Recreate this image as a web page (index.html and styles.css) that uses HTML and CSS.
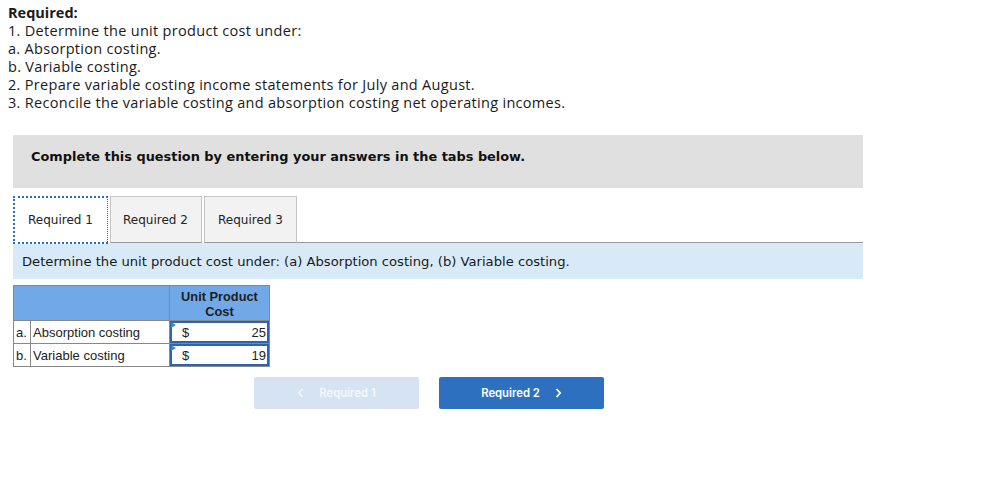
FILE: index.html
```html
<!DOCTYPE html>
<html>
<head>
<meta charset="utf-8">
<link rel="stylesheet" href="styles.css">
</head>
<body>
<div class="required">
  <div class="req-title">Required:</div>
  <div>1. Determine the unit product cost under:</div>
  <div>a. Absorption costing.</div>
  <div>b. Variable costing.</div>
  <div>2. Prepare variable costing income statements for July and August.</div>
  <div>3. Reconcile the variable costing and absorption costing net operating incomes.</div>
</div>

<div class="panel">
  <div class="banner">Complete this question by entering your answers in the tabs below.</div>
  <div class="tabs">
    <div class="tab active">Required 1</div>
    <div class="tab">Required 2</div>
    <div class="tab">Required 3</div>
    <div class="tab-fill"></div>
  </div>
  <div class="info">Determine the unit product cost under: (a) Absorption costing, (b) Variable costing.</div>

  <table class="cost">
    <tr class="head">
      <th colspan="2"></th>
      <th>Unit Product<br>Cost</th>
    </tr>
    <tr>
      <td class="letter">a.</td>
      <td class="label">Absorption costing</td>
      <td class="val"><div class="input"><span class="flag"></span><span>$</span><span>25</span></div></td>
    </tr>
    <tr>
      <td class="letter">b.</td>
      <td class="label">Variable costing</td>
      <td class="val"><div class="input"><span class="flag"></span><span>$</span><span>19</span></div></td>
    </tr>
  </table>

  <div class="nav">
    <div class="btn disabled">
      <svg width="7" height="10" viewBox="0 0 7 10"><path d="M5.5 1 L1.8 5 L5.5 9" fill="none" stroke="currentColor" stroke-width="1.8"/></svg>
      <span>Required 1</span>
    </div>
    <div class="btn primary">
      <span>Required 2</span>
      <svg width="7" height="10" viewBox="0 0 7 10"><path d="M1.5 1 L5.2 5 L1.5 9" fill="none" stroke="currentColor" stroke-width="1.8"/></svg>
    </div>
  </div>
</div>
</body>
</html>
```

FILE: styles.css
```css
body {
  margin: 0;
  background: #fff;
  color: #1a1a1a;
}
.required {
  padding: 4px 0 0 8px;
  font-family: "Open Sans", "Liberation Sans", sans-serif;
  font-size: 14.5px;
  letter-spacing: 0.3px;
  line-height: 18px;
  color: #1a1a1a;
}
.req-title {
  font-weight: bold;
  letter-spacing: 0;
}
.panel {
  margin: 23px 0 0 13px;
  width: 850px;
}
.banner {
  background: #e0e0e0;
  height: 53px;
  box-sizing: border-box;
  padding: 14px 0 0 18px;
  font-family: "DejaVu Sans", Verdana, sans-serif;
  font-weight: bold;
  font-size: 12.9px;
  color: #111;
}
.tabs {
  display: flex;
  margin-top: 8px;
  height: 47px;
  align-items: flex-end;
}
.tab {
  height: 47px;
  box-sizing: border-box;
  border: 1px solid #c4c4c4;
  background: #f2f2f2;
  font-family: "DejaVu Sans", Verdana, sans-serif;
  font-size: 12px;
  color: #222;
  display: flex;
  align-items: center;
  padding: 0 13px;
  margin-right: 2px;
  border-bottom: 1px solid #999;
}
.tab.active {
  background: #fff;
  border: 1px dotted #2a6bc4;
  border-width: 2px 1px 2px 2px;
  height: 48px;
  margin-bottom: -1px;
  padding: 0 14px 0 13px;
  width: 95px;
  margin-right: 2px;
}
.tab:nth-child(2) { width: 92px; padding-left: 12px; }
.tab:nth-child(3) { width: 93px; padding-left: 13px; }
.tab-fill {
  flex: 1;
  border-bottom: 1px solid #999;
  height: 1px;
  margin-left: -2px;
}
.info {
  background: #d8eaf8;
  height: 36px;
  box-sizing: border-box;
  padding: 11px 0 0 9px;
  font-family: "DejaVu Sans", Verdana, sans-serif;
  font-size: 13.15px;
  color: #1a1a1a;
}
.cost {
  margin-top: 6px;
  border-collapse: collapse;
  font-family: "Liberation Sans", Arial, sans-serif;
  font-size: 13px;
  color: #222;
}
.cost th {
  background: #71a8e7;
  border: 1px solid #888;
  height: 33px;
  padding: 0;
  font-weight: bold;
  font-size: 12.8px;
  line-height: 15px;
  color: #1e1e1e;
}
.cost th:first-child { width: 155px; }
.cost th:last-child { width: 99px; padding-top: 1px; }
.cost td {
  border: 1px solid #888;
  height: 22px;
  padding: 0;
}
.cost td.letter {
  width: 17px;
  padding-left: 2px;
  box-sizing: border-box;
}
.cost td.label {
  padding-left: 2px;
  width: 135px;
}
.cost td.val {
  padding: 0;
}
.input {
  position: relative;
  border: 2px solid #2c64ad;
  height: 22px;
  box-sizing: border-box;
  display: flex;
  justify-content: space-between;
  align-items: center;
  padding: 0 1px 0 10px;
}
.flag {
  position: absolute;
  left: -1px;
  top: -1px;
  width: 0;
  height: 0;
  border-top: 3px solid transparent;
  border-bottom: 3px solid transparent;
  border-left: 5px solid #3c86d8;
}
.nav {
  display: flex;
  gap: 20px;
  margin: 10px 0 0 241px;
}
.btn {
  width: 165px;
  height: 32px;
  border-radius: 2px;
  display: flex;
  align-items: center;
  justify-content: center;
  gap: 15px;
  font-family: Inter, "Liberation Sans", sans-serif;
  font-weight: 600;
  font-size: 11.3px;
  color: #fff;
}
.btn.disabled {
  background: #d5e3f3;
  color: #f4f8fd;
}
.btn.primary {
  background: #2d70bf;
}
```
